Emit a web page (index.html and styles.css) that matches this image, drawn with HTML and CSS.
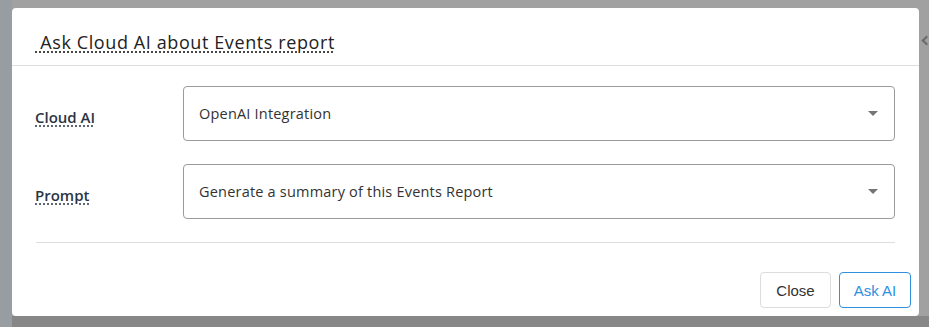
FILE: index.html
```html
<!DOCTYPE html>
<html lang="en">
<head>
  <meta charset="UTF-8">
  <title>Ask Cloud AI</title>
  <link rel="stylesheet" href="styles.css">
</head>
<body>
  <div class="backdrop">
    <div class="side-strip"></div>
    <div class="modal">
      <div class="modal-header">
        <h5 class="modal-title"><span class="dotted">&nbsp;Ask Cloud AI about Events report</span></h5>
      </div>
      <div class="modal-body">
        <div class="form-row">
          <label class="form-label"><span class="dotted">Cloud AI</span></label>
          <div class="select">
            <span>OpenAI Integration</span>
            <span class="caret"></span>
          </div>
        </div>
        <div class="form-row">
          <label class="form-label"><span class="dotted">Prompt</span></label>
          <div class="select">
            <span>Generate a summary of this Events Report</span>
            <span class="caret"></span>
          </div>
        </div>
        <hr class="divider">
      </div>
      <div class="modal-footer">
        <button class="btn btn-light">Close</button>
        <button class="btn btn-outline">Ask AI</button>
      </div>
    </div>
    <div class="right-strip"><span class="chevron"></span></div>
  </div>
</body>
</html>
```

FILE: styles.css
```css
* { margin: 0; padding: 0; box-sizing: border-box; }
html, body { height: 100%; }
body {
  background: #a1a1a1;
  font-family: 'Open Sans', 'Noto Sans', sans-serif;
  overflow: hidden;
}
.backdrop {
  display: flex;
  height: 327px;
  background: linear-gradient(to bottom, #a1a1a1 0, #a1a1a1 316px, #878787 316px);
}
.side-strip {
  width: 12px;
  flex-shrink: 0;
  background: #989da1;
}
.modal {
  width: 907px;
  height: 308px;
  flex-shrink: 0;
  margin-top: 8px;
  background: #fff;
  border-radius: 4px;
  display: flex;
  flex-direction: column;
}
.right-strip {
  flex: 1;
  min-width: 0;
  padding-top: 37px;
}
.chevron {
  display: block;
  width: 7px;
  height: 7px;
  border-left: 2px solid #6b6b6b;
  border-bottom: 2px solid #6b6b6b;
  transform: rotate(45deg);
  margin-left: 4px;
}
.modal-header {
  height: 58px;
  border-bottom: 1px solid #dedede;
  padding: 22px 0 0 23px;
}
.modal-title {
  font-size: 18px;
  font-weight: 400;
  color: #222;
  line-height: 24px;
  letter-spacing: 0.6px;
}
.dotted {
  text-decoration: underline dotted #333;
  text-underline-offset: 3px;
}
.modal-body {
  padding: 20px 24px 0 23px;
}
.form-row {
  display: flex;
  align-items: center;
  margin-bottom: 23px;
}
.form-label {
  width: 148px;
  flex-shrink: 0;
  font-size: 15px;
  font-weight: 600;
  color: #2b3445;
  padding-top: 6px;
}
.form-label .dotted { text-decoration-color: #2b3445; }
.select {
  flex: 1;
  height: 55px;
  border: 1px solid #9b9b9b;
  border-radius: 4px;
  padding: 0 16px 0 15px;
  display: flex;
  align-items: center;
  justify-content: space-between;
  font-size: 14.5px;
  letter-spacing: 0.2px;
  color: #333;
}
.select span:first-child { margin-top: -1px; }
.caret {
  width: 0;
  height: 0;
  border-left: 5px solid transparent;
  border-right: 5px solid transparent;
  border-top: 5px solid #757575;
}
.divider {
  border: 0;
  border-top: 1px solid #dedede;
  margin: 0 0 0 1px;
}
.modal-footer {
  display: flex;
  justify-content: flex-end;
  gap: 8px;
  padding: 29px 8px 0 0;
}
.btn {
  height: 36px;
  padding: 0;
  font-family: 'Liberation Sans', Arial, sans-serif;
  font-size: 15px;
  white-space: nowrap;
  background: #fff;
  border-radius: 4px;
  cursor: pointer;
}
.btn-light {
  border: 1px solid #dcdcdc;
  color: #333;
  width: 71px;
}
.btn-outline {
  border: 1px solid #2f8fe0;
  color: #2f8fe0;
  width: 72px;
}
```
